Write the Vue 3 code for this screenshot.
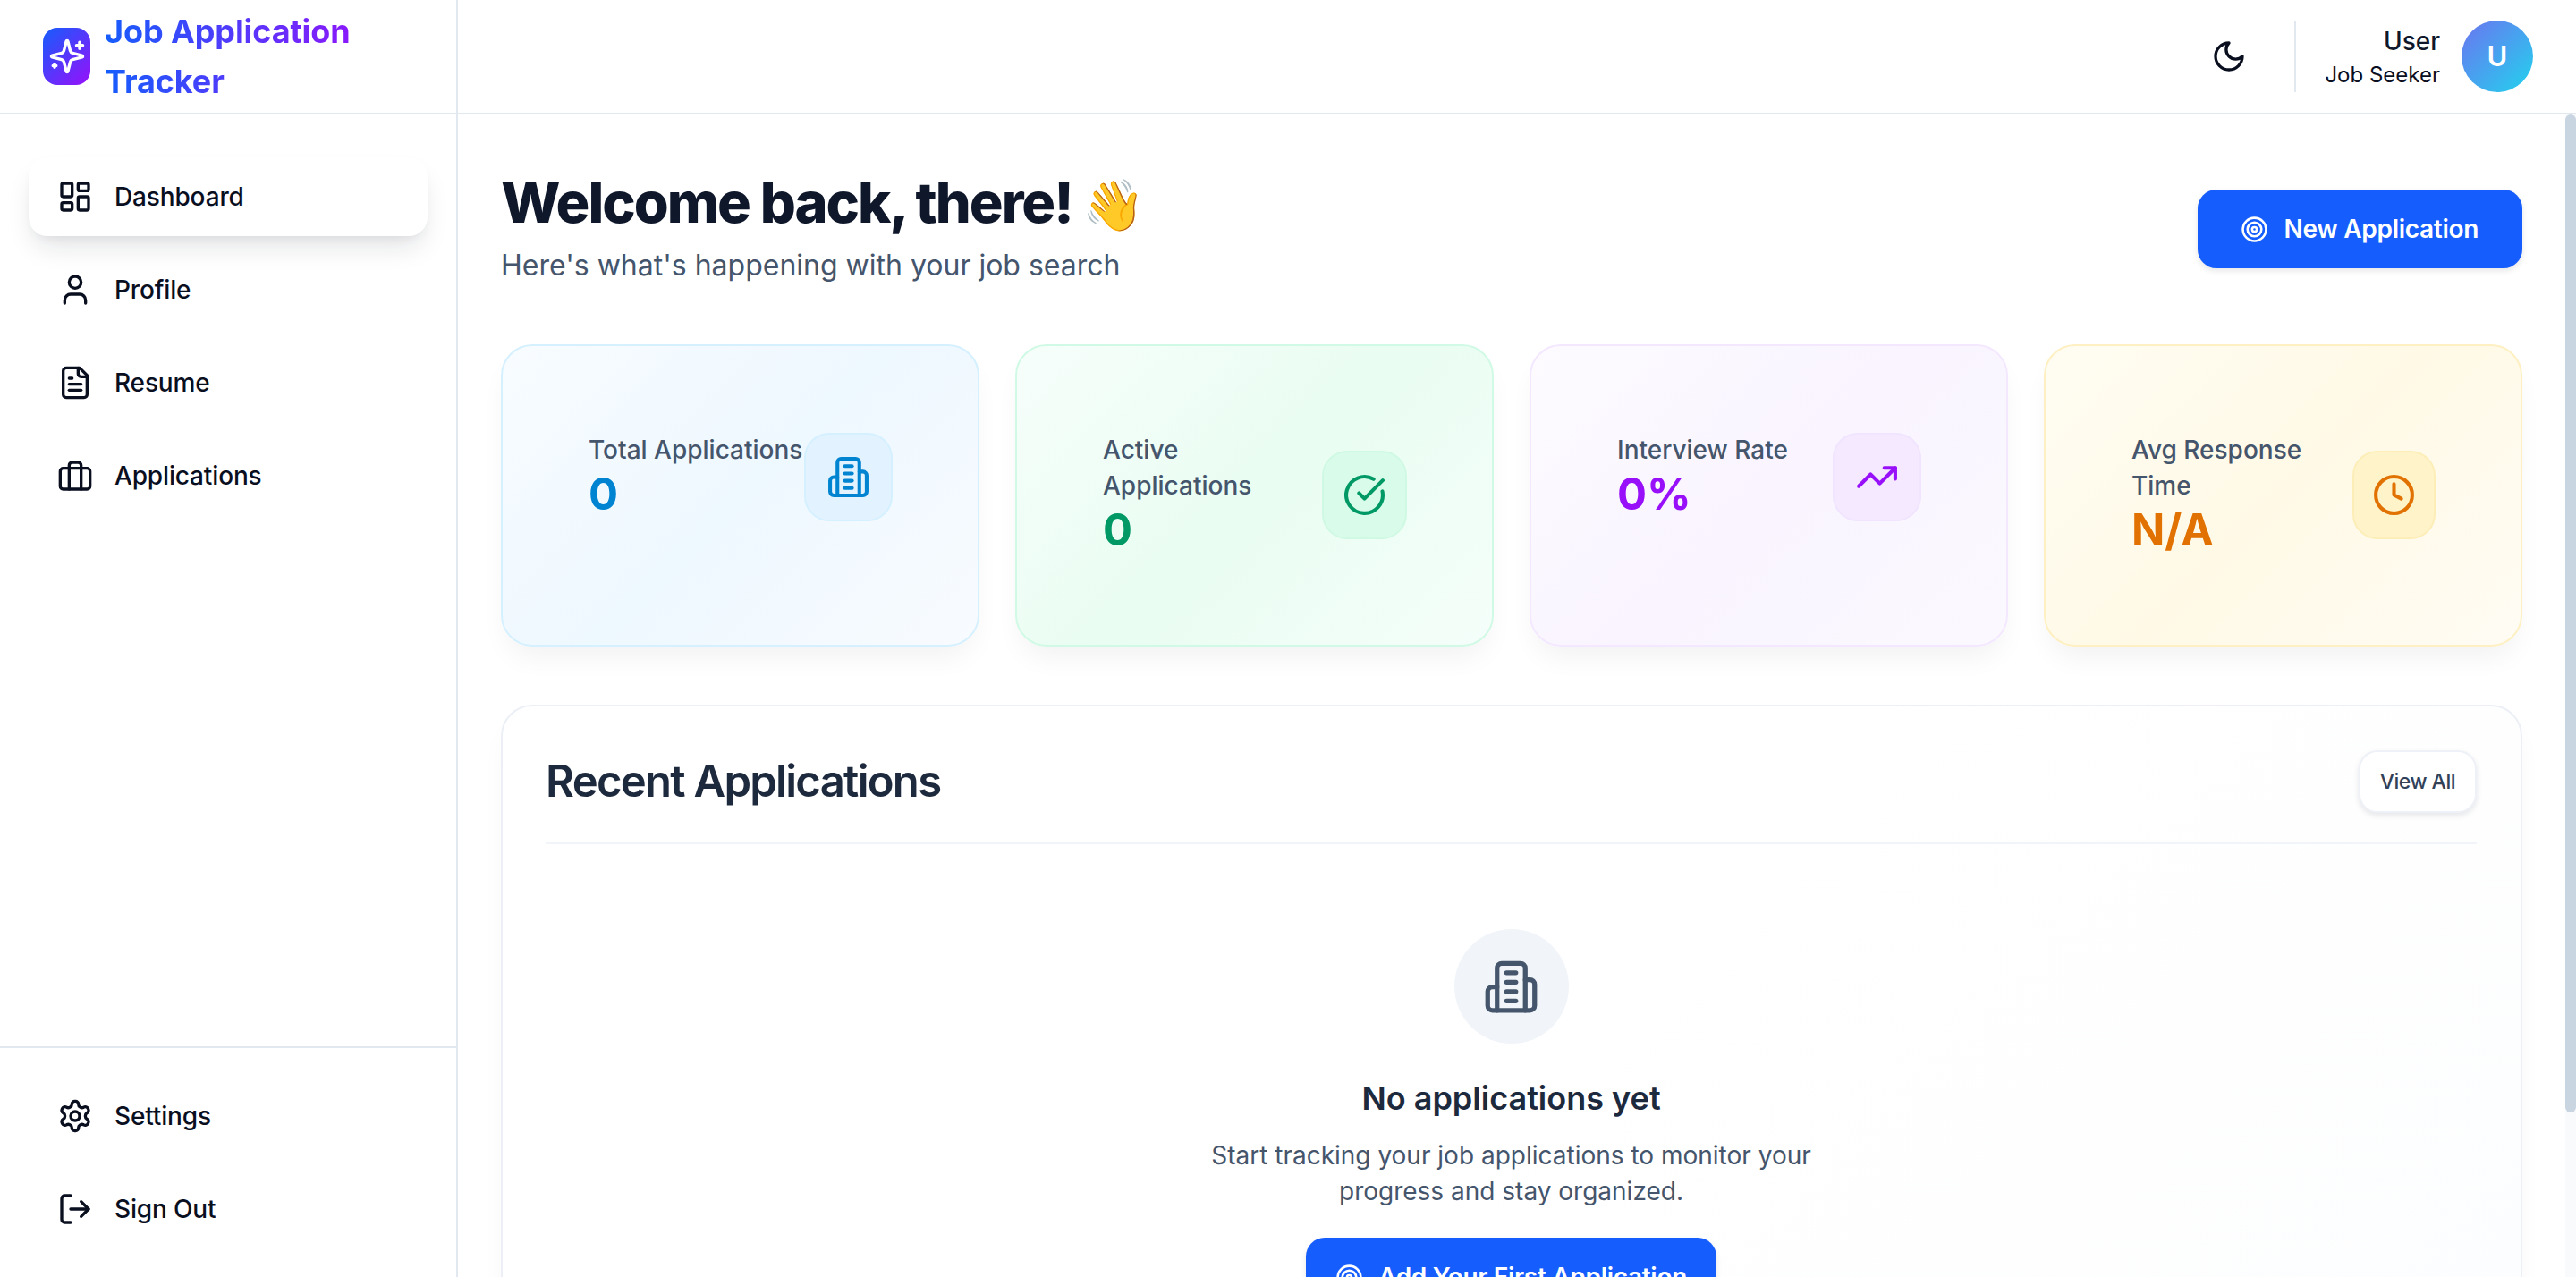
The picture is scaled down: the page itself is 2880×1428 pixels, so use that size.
<template>
  <div class="app">
    <aside class="sidebar">
      <div class="brand">
        <div class="brand-logo">
          <svg class="ico" width="42" height="42" viewBox="0 0 24 24">
            <path d="M9.937 15.5A2 2 0 0 0 8.5 14.063l-6.135-1.582a.5.5 0 0 1 0-.962L8.5 9.936A2 2 0 0 0 9.937 8.5l1.582-6.135a.5.5 0 0 1 .963 0L14.063 8.5A2 2 0 0 0 15.5 9.937l6.135 1.581a.5.5 0 0 1 0 .964L15.5 14.063a2 2 0 0 0-1.437 1.437l-1.582 6.135a.5.5 0 0 1-.963 0z" />
            <path d="M20 3v4M22 5h-4M4 17v2M5 18H3" />
          </svg>
        </div>
        <div class="brand-title">Job Application Tracker</div>
      </div>

      <nav class="nav">
        <a v-for="item in navItems" :key="item.label" class="nav-item" :class="{ active: item.active }">
          <svg class="ico nav-ico" viewBox="0 0 24 24" v-html="item.icon"></svg>
          <span>{{ item.label }}</span>
        </a>
      </nav>

      <div class="nav-bottom">
        <a v-for="item in bottomItems" :key="item.label" class="nav-item">
          <svg class="ico nav-ico" viewBox="0 0 24 24" v-html="item.icon"></svg>
          <span>{{ item.label }}</span>
        </a>
      </div>
    </aside>

    <div class="right">
      <header class="topbar">
        <button class="theme-btn">
          <svg class="ico nav-ico" viewBox="0 0 24 24"><path d="M12 3a6 6 0 0 0 9 9 9 9 0 1 1-9-9Z" /></svg>
        </button>
        <div class="user-info">
          <div class="user-name">User</div>
          <div class="user-role">Job Seeker</div>
        </div>
        <div class="avatar">U</div>
      </header>

      <div class="content">
        <main class="main">
          <div class="page-head">
            <div>
              <h1>Welcome back, there! <span class="wave">👋</span></h1>
              <p class="subtitle">Here's what's happening with your job search</p>
            </div>
            <button class="btn-primary">
              <svg class="ico btn-ico" viewBox="0 0 24 24" v-html="icons.target"></svg>
              New Application
            </button>
          </div>

          <section class="stats">
            <div v-for="stat in stats" :key="stat.label" class="stat-card" :class="stat.tone">
              <div class="stat-row">
                <div class="stat-text">
                  <div class="stat-label">{{ stat.label }}</div>
                  <div class="stat-value">{{ stat.value }}</div>
                </div>
                <div class="stat-icon">
                  <svg class="ico" viewBox="0 0 24 24" v-html="stat.icon"></svg>
                </div>
              </div>
            </div>
          </section>

          <section class="recent">
            <div class="recent-head">
              <h2>Recent Applications</h2>
              <button class="btn-ghost">View All</button>
            </div>
            <div class="empty">
              <div class="empty-circle">
                <svg class="ico" viewBox="0 0 24 24" v-html="icons.building"></svg>
              </div>
              <h3>No applications yet</h3>
              <p>Start tracking your job applications to monitor your progress and stay organized.</p>
              <button class="btn-primary btn-add">
                <svg class="ico btn-ico" viewBox="0 0 24 24" v-html="icons.target"></svg>
                Add Your First Application
              </button>
            </div>
          </section>
        </main>
        <div class="scrollbar"><div class="scrollbar-thumb"></div></div>
      </div>
    </div>
  </div>
</template>

<script setup>
const icons = {
  dashboard: '<rect x="3" y="3" width="7" height="9" rx="1"/><rect x="14" y="3" width="7" height="5" rx="1"/><rect x="14" y="12" width="7" height="9" rx="1"/><rect x="3" y="16" width="7" height="5" rx="1"/>',
  user: '<path d="M19 21v-2a4 4 0 0 0-4-4H9a4 4 0 0 0-4 4v2"/><circle cx="12" cy="7" r="4"/>',
  file: '<path d="M15 2H6a2 2 0 0 0-2 2v16a2 2 0 0 0 2 2h12a2 2 0 0 0 2-2V7Z"/><path d="M14 2v4a2 2 0 0 0 2 2h4"/><path d="M10 9H8"/><path d="M16 13H8"/><path d="M16 17H8"/>',
  briefcase: '<path d="M16 21V5a2 2 0 0 0-2-2h-4a2 2 0 0 0-2 2v16"/><rect x="2" y="7" width="20" height="14" rx="2"/>',
  settings: '<path d="M12.22 2h-.44a2 2 0 0 0-2 2v.18a2 2 0 0 1-1 1.73l-.43.25a2 2 0 0 1-2 0l-.15-.08a2 2 0 0 0-2.73.73l-.22.38a2 2 0 0 0 .73 2.73l.15.1a2 2 0 0 1 1 1.72v.51a2 2 0 0 1-1 1.74l-.15.09a2 2 0 0 0-.73 2.73l.22.38a2 2 0 0 0 2.73.73l.15-.08a2 2 0 0 1 2 0l.43.25a2 2 0 0 1 1 1.73V20a2 2 0 0 0 2 2h.44a2 2 0 0 0 2-2v-.18a2 2 0 0 1 1-1.73l.43-.25a2 2 0 0 1 2 0l.15.08a2 2 0 0 0 2.73-.73l.22-.39a2 2 0 0 0-.73-2.73l-.15-.08a2 2 0 0 1-1-1.74v-.5a2 2 0 0 1 1-1.74l.15-.09a2 2 0 0 0 .73-2.73l-.22-.38a2 2 0 0 0-2.73-.73l-.15.08a2 2 0 0 1-2 0l-.43-.25a2 2 0 0 1-1-1.73V4a2 2 0 0 0-2-2z"/><circle cx="12" cy="12" r="3"/>',
  logout: '<path d="M9 21H5a2 2 0 0 1-2-2V5a2 2 0 0 1 2-2h4"/><polyline points="16 17 21 12 16 7"/><line x1="21" y1="12" x2="9" y2="12"/>',
  target: '<circle cx="12" cy="12" r="10"/><circle cx="12" cy="12" r="6"/><circle cx="12" cy="12" r="2"/>',
  building: '<path d="M6 22V4a2 2 0 0 1 2-2h8a2 2 0 0 1 2 2v18Z"/><path d="M6 12H4a2 2 0 0 0-2 2v6a2 2 0 0 0 2 2h2"/><path d="M18 9h2a2 2 0 0 1 2 2v9a2 2 0 0 1-2 2h-2"/><path d="M10 6h4"/><path d="M10 10h4"/><path d="M10 14h4"/><path d="M10 18h4"/>',
  check: '<path d="M21.801 10A10 10 0 1 1 17 3.335"/><path d="m9 11 3 3L22 4"/>',
  trending: '<polyline points="22 7 13.5 15.5 8.5 10.5 2 17"/><polyline points="16 7 22 7 22 13"/>',
  clock: '<circle cx="12" cy="12" r="10"/><polyline points="12 6 12 12 16 14"/>'
}

const navItems = [
  { label: 'Dashboard', icon: icons.dashboard, active: true },
  { label: 'Profile', icon: icons.user },
  { label: 'Resume', icon: icons.file },
  { label: 'Applications', icon: icons.briefcase }
]

const bottomItems = [
  { label: 'Settings', icon: icons.settings },
  { label: 'Sign Out', icon: icons.logout }
]

const stats = [
  { label: 'Total Applications', value: '0', icon: icons.building, tone: 'sky' },
  { label: 'Active Applications', value: '0', icon: icons.check, tone: 'green' },
  { label: 'Interview Rate', value: '0%', icon: icons.trending, tone: 'purple' },
  { label: 'Avg Response Time', value: 'N/A', icon: icons.clock, tone: 'amber' }
]
</script>

<style>
html,
body {
  margin: 0;
  height: 100%;
  overflow: hidden;
  background: #fff;
}
</style>

<style scoped>
.app {
  display: flex;
  height: 1428px;
  font-family: Inter, "Noto Color Emoji", "Noto Sans", sans-serif;
  color: #0f172b;
  line-height: 1.6;
}

.ico {
  fill: none;
  stroke: currentColor;
  stroke-width: 2;
  stroke-linecap: round;
  stroke-linejoin: round;
}

/* sidebar */
.sidebar {
  width: 512px;
  flex-shrink: 0;
  box-sizing: border-box;
  border-right: 2px solid #e2e8f0;
  display: flex;
  flex-direction: column;
}

.brand {
  height: 128px;
  box-sizing: border-box;
  padding: 0 48px;
  border-bottom: 2px solid #e2e8f0;
  display: flex;
  align-items: center;
  gap: 16px;
}

.brand-logo {
  width: 64px;
  height: 64px;
  border-radius: 16px;
  background: linear-gradient(135deg, #155dfc, #9810fa);
  color: #fff;
  display: flex;
  align-items: center;
  justify-content: center;
}

.brand-logo svg {
  flex-shrink: 0;
}

.brand-title {
  font-size: 36px;
  font-weight: 700;
  line-height: 56px;
  letter-spacing: -0.1px;
  background: linear-gradient(90deg, #155dfc, #9810fa 90%);
  -webkit-background-clip: text;
  background-clip: text;
  color: transparent;
}

.nav {
  flex: 1;
  padding: 48px 32px 0;
  display: flex;
  flex-direction: column;
  gap: 16px;
}

.nav-item {
  height: 88px;
  box-sizing: border-box;
  padding: 0 32px;
  border-radius: 21px;
  display: flex;
  align-items: center;
  gap: 24px;
  font-size: 28px;
  font-weight: 500;
  letter-spacing: -0.15px;
  color: #0a0f1f;
}

.nav-item.active {
  background: #fff;
  box-shadow: 0 17px 30px -6px rgba(15, 23, 43, 0.12), 0 6px 12px -4px rgba(15, 23, 43, 0.06);
}

.nav-ico {
  width: 40px;
  height: 40px;
  flex-shrink: 0;
}

.nav-bottom {
  border-top: 2px solid #e2e8f0;
  padding: 32px 32px 32px;
  display: flex;
  flex-direction: column;
  gap: 16px;
}

/* top bar */
.right {
  flex: 1;
  min-width: 0;
  display: flex;
  flex-direction: column;
}

.topbar {
  height: 128px;
  flex-shrink: 0;
  box-sizing: border-box;
  border-bottom: 2px solid #e2e8f0;
  padding: 0 48px;
  display: flex;
  align-items: center;
  justify-content: flex-end;
}

.theme-btn {
  background: none;
  border: none;
  padding: 0;
  margin-right: 53px;
  color: #0a0f1f;
  display: flex;
}

.user-info {
  border-left: 2px solid #e2e8f0;
  height: 80px;
  padding-left: 32px;
  text-align: right;
  display: flex;
  flex-direction: column;
  justify-content: center;
}

.user-name {
  font-size: 28px;
  font-weight: 500;
  line-height: 40px;
  padding-top: 2px;
}

.user-role {
  font-size: 24px;
  line-height: 36px;
  color: #0a0f1f;
}

.avatar {
  width: 80px;
  height: 80px;
  margin-left: 24px;
  border-radius: 50%;
  background: linear-gradient(135deg, #6b74f0, #22d3ee);
  color: #fff;
  font-size: 31px;
  font-weight: 600;
  display: flex;
  align-items: center;
  justify-content: center;
}

/* main */
.content {
  flex: 1;
  min-height: 0;
  display: flex;
}

.main {
  flex: 1;
  min-width: 0;
  overflow: hidden;
  box-sizing: border-box;
  padding: 52px 48px 48px;
  background: #fff;
}

.scrollbar {
  width: 12px;
  flex-shrink: 0;
  background: #f8fafc;
}

.scrollbar-thumb {
  height: 1116px;
  background: #cad5e2;
  border-radius: 6px;
}

.page-head {
  height: 152px;
  display: flex;
  align-items: center;
  justify-content: space-between;
  margin-bottom: 53px;
}

.page-head > div {
  padding-bottom: 8px;
}

h1 {
  margin: 0;
  font-size: 63px;
  font-weight: 800;
  line-height: 86px;
  letter-spacing: -0.032em;
  color: #0f172b;
}

.wave {
  font-size: 56px;
  letter-spacing: 0;
}

.subtitle {
  margin: 0;
  font-size: 32px;
  line-height: 50px;
  color: #45556c;
}

.btn-primary {
  height: 88px;
  padding: 0 49px 0 48px;
  border: none;
  border-radius: 21px;
  background: #155dfc;
  color: #fff;
  font-family: inherit;
  font-size: 28px;
  font-weight: 600;
  letter-spacing: -0.3px;
  display: inline-flex;
  align-items: center;
  gap: 18px;
  box-shadow: 0 3px 6px rgba(15, 23, 43, 0.1);
}

.btn-ico {
  width: 31px;
  height: 31px;
}

.stats {
  display: grid;
  grid-template-columns: repeat(4, 1fr);
  gap: 40px;
  margin-bottom: 65px;
}

.stat-card {
  height: 338px;
  box-sizing: border-box;
  padding: 96px 95px 96px 96px;
  border: 2px solid;
  border-radius: 35px;
  box-shadow: 0 18px 32px -8px rgba(15, 23, 43, 0.06);
}

.stat-row {
  display: flex;
  align-items: center;
  justify-content: space-between;
}

.stat-label {
  font-size: 28px;
  font-weight: 500;
  line-height: 40px;
  color: #45556c;
}

.stat-value {
  font-size: 49px;
  font-weight: 700;
  line-height: 60px;
}

.stat-icon {
  width: 99px;
  height: 99px;
  flex-shrink: 0;
  box-sizing: border-box;
  border: 2px solid;
  border-radius: 28px;
  display: flex;
  align-items: center;
  justify-content: center;
}

.stat-icon svg {
  width: 49px;
  height: 49px;
  flex-shrink: 0;
}

.sky {
  background: linear-gradient(135deg, #f8fcff, #eef8ff 50%, #f8fbff);
  border-color: #d5f0ff;
}
.sky .stat-value,
.sky .stat-icon {
  color: #0084d1;
}
.sky .stat-icon {
  background: #e2f3ff;
  border-color: #d5f0ff;
}

.green {
  background: linear-gradient(135deg, #f7fefb, #e9fdf2 50%, #f5fefa);
  border-color: #d0fae5;
}
.green .stat-value,
.green .stat-icon {
  color: #009966;
}
.green .stat-icon {
  width: 95px;
  background: #d9fbe9;
  border-color: #cff9e3;
}

.purple {
  background: linear-gradient(135deg, #fdfbff, #f9f4ff 50%, #fbf9ff);
  border-color: #f3e8ff;
}
.purple .stat-value,
.purple .stat-icon {
  color: #9810fa;
}
.purple .stat-icon {
  background: #f4e9ff;
  border-color: #f0e4fe;
}

.amber {
  background: linear-gradient(135deg, #fffdf3, #fff9e6 50%, #fffcf4);
  border-color: #fef0c2;
}
.amber .stat-value,
.amber .stat-icon {
  color: #e17100;
}
.amber .stat-icon {
  width: 93px;
  background: #fef3c9;
  border-color: #fdeeb8;
}

.recent {
  border: 2px solid #ecf0f6;
  border-radius: 35px;
  padding: 49px 49px 49px 48px;
  background: linear-gradient(135deg, #fff 50%, #fcfdfe);
  box-shadow: 0 18px 32px -8px rgba(15, 23, 43, 0.05);
}

.recent-head {
  display: flex;
  align-items: center;
  justify-content: space-between;
  padding-bottom: 33px;
  border-bottom: 2px solid #f1f5f9;
}

h2 {
  margin: 0;
  font-size: 49px;
  font-weight: 600;
  line-height: 70px;
  letter-spacing: -0.035em;
  color: #1d293d;
}

.btn-ghost {
  height: 70px;
  padding: 0 22px;
  border: 2px solid #eef1f7;
  border-radius: 21px;
  background: #fff;
  color: #314158;
  font-family: inherit;
  font-size: 23px;
  font-weight: 500;
  letter-spacing: -0.5px;
  box-shadow: 0 3px 6px rgba(15, 23, 43, 0.1);
}

.empty {
  padding: 95px 0 71px;
  display: flex;
  flex-direction: column;
  align-items: center;
  text-align: center;
}

.empty-circle {
  width: 128px;
  height: 128px;
  border-radius: 50%;
  background: #f1f5f9;
  color: #45556c;
  display: flex;
  align-items: center;
  justify-content: center;
  margin-bottom: 33px;
}

.empty-circle svg {
  width: 63px;
  height: 63px;
}

h3 {
  margin: 0 0 16px;
  font-size: 36px;
  font-weight: 600;
  line-height: 56px;
  color: #1d293d;
}

.empty p {
  margin: 0 0 32px;
  width: 700px;
  font-size: 28px;
  line-height: 40px;
  color: #45556c;
}

.btn-add {
  padding: 0 33px;
  gap: 17px;
}
</style>
